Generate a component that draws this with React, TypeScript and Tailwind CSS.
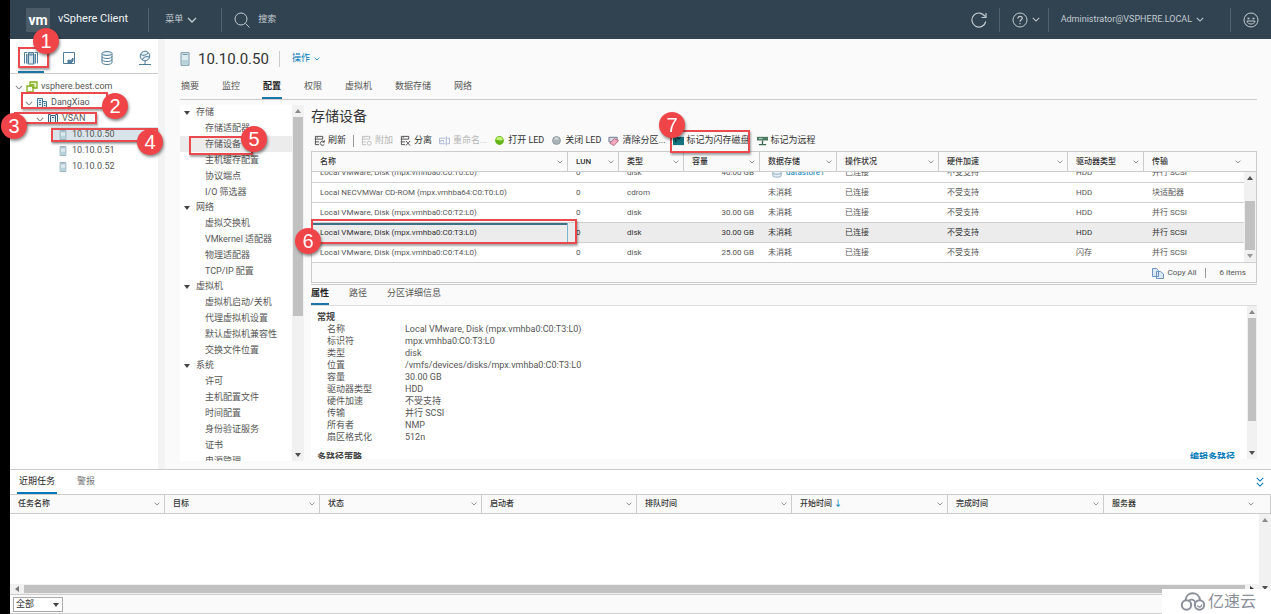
import { useEffect, useRef, type ReactNode } from 'react';
import { clsx } from 'clsx';

const tree = [
  { label: 'vsphere.best.com', indent: 'pl-[5px]', icon: 'vcenter', open: true },
  { label: 'DangXiao', indent: 'pl-[15px]', icon: 'datacenter', open: true },
  { label: 'VSAN', indent: 'pl-[26px]', icon: 'cluster', open: true },
  { label: '10.10.0.50', indent: 'ml-[41px] pl-1.5', icon: 'host', selected: true },
  { label: '10.10.0.51', indent: 'ml-[41px] pl-1.5', icon: 'host' },
  { label: '10.10.0.52', indent: 'ml-[41px] pl-1.5', icon: 'host' },
];

const hostTabs = ['摘要', '监控', '配置', '权限', '虚拟机', '数据存储', '网络'];

const navGroups = [
  { title: '存储', items: ['存储适配器', '存储设备', '主机缓存配置', '协议端点', 'I/O 筛选器'] },
  { title: '网络', items: ['虚拟交换机', 'VMkernel 适配器', '物理适配器', 'TCP/IP 配置'] },
  { title: '虚拟机', items: ['虚拟机启动/关机', '代理虚拟机设置', '默认虚拟机兼容性', '交换文件位置'] },
  { title: '系统', items: ['许可', '主机配置文件', '时间配置', '身份验证服务', '证书', '电源管理'] },
];

const deviceColumns = [
  { label: '名称', width: 'w-[256px]' },
  { label: 'LUN', width: 'w-[51px]' },
  { label: '类型', width: 'w-[65px]' },
  { label: '容量', width: 'w-[76px]' },
  { label: '数据存储', width: 'w-[77px]' },
  { label: '操作状况', width: 'w-[102px]' },
  { label: '硬件加速', width: 'w-[129px]' },
  { label: '驱动器类型', width: 'w-[76px]' },
  { label: '传输', width: 'w-[102px]' },
];

const devices = [
  ['Local VMware, Disk (mpx.vmhba0:C0:T0:L0)', '0', 'disk', '40.00 GB', 'datastore1', '已连接', '不受支持', 'HDD', '并行 SCSI'],
  ['Local NECVMWar CD-ROM (mpx.vmhba64:C0:T0:L0)', '0', 'cdrom', '', '未消耗', '已连接', '不受支持', 'HDD', '块适配器'],
  ['Local VMware, Disk (mpx.vmhba0:C0:T2:L0)', '0', 'disk', '30.00 GB', '未消耗', '已连接', '不受支持', 'HDD', '并行 SCSI'],
  ['Local VMware, Disk (mpx.vmhba0:C0:T3:L0)', '0', 'disk', '30.00 GB', '未消耗', '已连接', '不受支持', 'HDD', '并行 SCSI'],
  ['Local VMware, Disk (mpx.vmhba0:C0:T4:L0)', '0', 'disk', '25.00 GB', '未消耗', '已连接', '不受支持', '闪存', '并行 SCSI'],
];
const selectedDevice = 3;

const properties = [
  ['名称', 'Local VMware, Disk (mpx.vmhba0:C0:T3:L0)'],
  ['标识符', 'mpx.vmhba0:C0:T3:L0'],
  ['类型', 'disk'],
  ['位置', '/vmfs/devices/disks/mpx.vmhba0:C0:T3:L0'],
  ['容量', '30.00 GB'],
  ['驱动器类型', 'HDD'],
  ['硬件加速', '不受支持'],
  ['传输', '并行 SCSI'],
  ['所有者', 'NMP'],
  ['扇区格式化', '512n'],
];

const taskColumns = [
  { label: '任务名称', width: 'w-[155px]' },
  { label: '目标', width: 'w-[155px]' },
  { label: '状态', width: 'w-[162px]' },
  { label: '启动者', width: 'w-[155px]' },
  { label: '排队时间', width: 'w-[155px]' },
  { label: '开始时间', width: 'w-[156px]', sorted: true },
  { label: '完成时间', width: 'w-[156px]' },
  { label: '服务器', width: 'w-[167px]' },
];

function Chevron({ className }: { className?: string }) {
  return (
    <svg viewBox="0 0 10 6" className={clsx('shrink-0 fill-none stroke-current', className)} aria-hidden="true">
      <path d="M1 1l4 4 4-4" strokeWidth="1.3" />
    </svg>
  );
}

function TreeIcon({ kind }: { kind: string }) {
  if (kind === 'vcenter') {
    return (
      <svg viewBox="0 0 12 12" className="size-3 shrink-0 fill-none stroke-[#7fae1c]" strokeWidth="1.3" aria-hidden="true">
        <path d="M4 1h7v6H4z" fill="#eef6d3" />
        <path d="M1 5h6v6H1z" fill="#fff" />
        <path d="M5 5.5v-2h3v3H6" strokeWidth="0.9" />
      </svg>
    );
  }
  if (kind === 'datacenter') {
    return (
      <svg viewBox="0 0 12 12" className="size-3 shrink-0 fill-none stroke-[#43759a]" aria-hidden="true">
        <path d="M1.5 11V1.5h5V11M6.5 4.5h4V11h-4M1 11h3" fill="#e2eef5" />
        <path d="M3 3.5h2M3 5.5h2M3 7.5h2M8 6.5h1.500M8 8.500h1.500" />
      </svg>
    );
  }
  if (kind === 'cluster') {
    return (
      <svg viewBox="0 0 12 12" className="size-3 shrink-0 fill-none stroke-[#35607f]" aria-hidden="true">
        <path d="M3.500 2.500h5v8h-5z" fill="#e2eef5" />
        <path d="M3.500 1.500h-2v9M8.500 1.500h2v9M5 4.500h2" />
      </svg>
    );
  }
  return <HostIcon className="h-2.5 w-3" />;
}

function HostIcon({ className }: { className: string }) {
  return (
    <svg viewBox="0 0 10 14" className={clsx('shrink-0', className)} aria-hidden="true">
      <path d="M1 .7h8v12.6H1z" fill="#dcebef" stroke="#7898a8" />
      <path d="M2.500 2.500h5" stroke="#7898a8" />
      <path d="M2 8h6v4.500H2z" fill="#b6d3da" />
    </svg>
  );
}

const inventoryTabs: { name: string; drawing: ReactNode }[] = [
  {
    name: '主机和集群',
    drawing: (
      <>
        <path d="M5 4h6v10H5z" fill="#d9e8ef" />
        <path d="M4.500 2.500h-3v11M3.500 4v9.500M11.500 2.500h3v11M5.500 13.500v-11h5v11M6.500 5h3M12.500 4v9.500" />
      </>
    ),
  },
  {
    name: '虚拟机和模板',
    drawing: (
      <>
        <path d="M2.500 2.500h11v11h-11z" />
        <path d="M12 8v3l-2 2H7v-3l3 .5z" fill="#5c8aa5" />
      </>
    ),
  },
  {
    name: '存储',
    drawing: (
      <>
        <path d="M3 3.500v9c0 1 2.200 2 5 2s5-1 5-2v-9" />
        <ellipse cx="8" cy="3.500" rx="5" ry="2" fill="#e6f0f5" />
        <path d="M3 6.500c0 1 2.200 2 5 2s5-1 5-2M3 9.500c0 1 2.200 2 5 2s5-1 5-2" />
      </>
    ),
  },
  {
    name: '网络',
    drawing: (
      <>
        <circle cx="8" cy="6" r="4.800" fill="#e6f0f5" />
        <path d="M4 4.500c2 1.500 5 1 7-1.500M5.500 9.800C6 7 9 6 12.500 7M8 11v3.500M2 14.500h12" />
      </>
    ),
  },
];

function ToolIcon({ kind }: { kind: string }) {
  switch (kind) {
    case 'ledOn':
      return (
        <svg viewBox="0 0 12 12" className="size-[11px] shrink-0" aria-hidden="true">
          <circle cx="6" cy="6" r="4.800" fill="#63b51b" />
          <path d="M2.500 5.500a3.500 3.500 0 017 0c-2 1.500-4.500-.5-7 0z" fill="#c3ef75" />
        </svg>
      );
    case 'ledOff':
      return (
        <svg viewBox="0 0 12 12" className="size-[11px] shrink-0" aria-hidden="true">
          <circle cx="6" cy="6" r="4.300" fill="#aab4b8" stroke="#8b969b" />
          <path d="M3.500 5a2.500 2.500 0 015 0z" fill="#d5dbdd" />
        </svg>
      );
    case 'erase':
      return (
        <svg viewBox="0 0 12 12" className="size-[11px] shrink-0" aria-hidden="true">
          <path d="M1 2.500h9v5H1z" fill="#d5d7e2" stroke="#6d7188" />
          <path d="M2 9l5-5 4.500 2-5 5.500z" fill="#f2a9bd" stroke="#a3566d" strokeWidth="0.8" />
        </svg>
      );
    case 'flash':
      return (
        <svg viewBox="0 0 12 12" className="size-[11px] shrink-0" aria-hidden="true">
          <path d="M0 2h12v9H0z" fill="#14737f" />
          <path d="M3 4v4M5 4h3" stroke="#0b3b45" strokeWidth="1.500" />
        </svg>
      );
    case 'remote':
      return (
        <svg viewBox="0 0 12 12" className="size-[11px] shrink-0" aria-hidden="true">
          <path d="M0 2h12v4H0z" fill="#4c7a63" />
          <path d="M2 4h4" stroke="#cfe3d8" />
          <path d="M6 6v4M2 10.500h8" stroke="#3f6b55" strokeWidth="1.500" />
        </svg>
      );
    case 'rename':
      return (
        <svg viewBox="0 0 12 12" className="size-[11px] shrink-0 fill-none stroke-[#a9b4d6]" aria-hidden="true">
          <path d="M7 3.500H.500v6H7M9 3.500h2.500v6H9M8 1.500v10M2 8V6h3v2" />
        </svg>
      );
    default:
      return (
        <svg viewBox="0 0 12 12" className="size-[11px] shrink-0 fill-none stroke-current" strokeWidth="0.9" aria-hidden="true">
          <path d="M9.500 4.500v-3h-8v9h4M1.500 4.500h8M1.500 7.500h4M3 2.800h1" />
          {kind === 'refresh' && <path d="M11 7.500a2.300 2.300 0 10.300 2.500M11.300 5.800v2h-2" />}
          {kind === 'attach' && <circle cx="9" cy="9" r="2.200" />}
          {kind === 'detach' && <path d="M6.500 6.500l4.500 5M11 6.500l-4.500 5" />}
        </svg>
      );
  }
}

const tools = [
  { label: '附加', icon: 'attach', disabled: true },
  { label: '分离', icon: 'detach' },
  { label: '重命名...', icon: 'rename', disabled: true },
  { label: '打开 LED', icon: 'ledOn' },
  { label: '关闭 LED', icon: 'ledOff' },
  { label: '清除分区...', icon: 'erase' },
  { label: '标记为闪存磁盘', icon: 'flash' },
  { label: '标记为远程', icon: 'remote' },
];

function Arrow({ className }: { className?: string }) {
  return (
    <svg viewBox="0 0 6 4" className={clsx('h-1 w-1.5 shrink-0 fill-current', className)} aria-hidden="true">
      <path d="M0 4l3-4 3 4z" />
    </svg>
  );
}

function Scrollbar({ thumb, className }: { thumb: string; className?: string }) {
  return (
    <div className={clsx('flex shrink-0 flex-col items-center bg-[#f1f1f1]', className)}>
      <Arrow className="my-1 text-[#8a8a8a]" />
      <div className="flex min-h-0 w-full flex-1 flex-col px-px">
        <div className={clsx('w-full bg-[#c1c1c1]', thumb)} />
      </div>
      <Arrow className="my-1 rotate-180 text-[#505050]" />
    </div>
  );
}

function Header() {
  return (
    <header className="flex h-[39px] shrink-0 items-center bg-[#314351] text-[9px] text-[#c3ccd2]">
      <div className="ml-4 flex size-6 items-center justify-center bg-[#4b5b67] text-sm font-bold text-white">vm</div>
      <span className="ml-2 text-[11px] text-[#eef1f3]">vSphere Client</span>
      <div className="ml-5 h-6 w-px bg-[#52626e]" />
      <button className="ml-4 flex items-center gap-1">
        菜单
        <Chevron className="w-2.5" />
      </button>
      <div className="ml-6 h-6 w-px bg-[#52626e]" />
      <label className="ml-3 flex items-center gap-2">
        <svg viewBox="0 0 16 16" className="size-4 fill-none stroke-current" aria-hidden="true">
          <circle cx="7" cy="7" r="6" />
          <path d="M11.500 11.500l4 4" />
        </svg>
        <input type="text" placeholder="搜索" className="w-24 bg-transparent outline-none placeholder:text-[#c3ccd2]" />
      </label>
      <div className="ml-auto flex items-center">
        <button aria-label="刷新">
          <svg viewBox="0 0 16 16" className="size-4 fill-none stroke-current" strokeWidth="1.200" aria-hidden="true">
            <path d="M14 4.500a7 7 0 10.800 5M15 1v4.500h-4.500" />
          </svg>
        </button>
        <div className="ml-3 h-6 w-px bg-[#52626e]" />
        <button aria-label="帮助" className="ml-3 flex items-center gap-1">
          <svg viewBox="0 0 16 16" className="size-4 fill-none stroke-current" aria-hidden="true">
            <circle cx="8" cy="8" r="7" />
            <path d="M5.800 6.500c0-3 4.500-2.800 4.500-.2 0 1.600-2.300 1.500-2.300 3.400M8 11v1.300" strokeWidth="1.200" />
          </svg>
          <Chevron className="w-2" />
        </button>
        <div className="ml-2 h-6 w-px bg-[#52626e]" />
        <button className="ml-3 flex items-center gap-1">
          Administrator@VSPHERE.LOCAL
          <Chevron className="w-2" />
        </button>
        <div className="ml-[26px] h-6 w-px bg-[#52626e]" />
        <button aria-label="反馈" className="mx-3">
          <svg viewBox="0 0 16 16" className="size-4 fill-none stroke-current" aria-hidden="true">
            <circle cx="8" cy="8" r="7" />
            <path d="M4.500 6.500h2M9.500 6.500h2" strokeWidth="1.300" />
            <path d="M4 9h8c-.5 4-7.500 4-8 0z" />
          </svg>
        </button>
      </div>
    </header>
  );
}

function Inventory() {
  return (
    <aside className="w-[148px] shrink-0 bg-white">
      <div className="flex h-[35px] items-end gap-3 border-b border-[#ccc] pl-2">
        {inventoryTabs.map((tab, i) => (
          <button
            key={tab.name}
            aria-label={tab.name}
            className={clsx(
              'flex h-7 w-[26px] shrink-0 items-center justify-center border-b-2',
              i === 0 ? 'border-[#1a76a8]' : 'border-transparent',
            )}
          >
            <svg viewBox="0 0 16 16" className="size-4 fill-none stroke-[#3c6f8e]" strokeWidth="0.9" aria-hidden="true">
              {tab.drawing}
            </svg>
          </button>
        ))}
      </div>
      <ul className="pt-[5px] text-[9px] text-[#565656]">
        {tree.map((node) => (
          <li key={node.label} className={clsx('flex h-4 items-center gap-[3px]', node.indent, node.selected && 'bg-[#d9e4ea]')}>
            {node.open && <Chevron className="w-2 text-[#8a8a8a]" />}
            <TreeIcon kind={node.icon} />
            <span>{node.label}</span>
          </li>
        ))}
      </ul>
    </aside>
  );
}

function SettingsNav() {
  return (
    <div className="flex w-[124px] shrink-0">
      <nav className="min-w-0 flex-1 overflow-hidden bg-white text-[9px] whitespace-nowrap text-[#565656]">
        {navGroups.map((group) => (
          <section key={group.title}>
            <h3 className="flex h-[15px] items-center gap-1.5 pl-1">
              <Arrow className="rotate-180 text-[#444]" />
              {group.title}
            </h3>
            <ul>
              {group.items.map((item) => (
                <li key={item} className={clsx('h-4 pl-[25px] leading-4', item === '存储设备' && 'bg-[#ececec]')}>
                  <a href="#">{item}</a>
                </li>
              ))}
            </ul>
          </section>
        ))}
      </nav>
      <Scrollbar className="w-3" thumb="h-[60%]" />
    </div>
  );
}

function DeviceGrid() {
  const scrollRef = useRef<HTMLDivElement>(null);

  useEffect(() => {
    const el = scrollRef.current;
    if (el) el.scrollTop = el.scrollHeight;
  }, []);

  return (
    <div className="shrink-0 border border-[#ccc] bg-[#fafafa] text-[8px] text-[#565656]">
      <div className="flex">
        <div ref={scrollRef} className="h-[111px] min-w-0 flex-1 overflow-y-auto [scrollbar-width:none]">
          <table className="w-full table-fixed border-separate border-spacing-0 whitespace-nowrap">
            <thead>
              <tr>
                {deviceColumns.map((col) => (
                  <th
                    key={col.label}
                    className={clsx('sticky top-0 z-10 h-5 border-r border-b border-[#ccc] bg-[#fafafa] pl-2 text-left font-medium text-[#333]', col.width)}
                  >
                    <span className="flex items-center justify-between pr-1">
                      {col.label}
                      <Chevron className="w-1.5 text-[#777]" />
                    </span>
                  </th>
                ))}
              </tr>
            </thead>
            <tbody className="bg-white">
              {devices.map((row, r) => (
                <tr key={row[0]} className={clsx(r === selectedDevice && 'bg-[#ececec] text-[#333]')}>
                  {row.map((cell, c) => (
                    <td
                      key={c}
                      className={clsx(
                        'h-5 border-b border-[#d0d0d0] pl-2',
                        c === 3 && 'pr-1.5 text-right',
                        r === selectedDevice && c === 0 && 'border-r border-r-[#7db4cf] shadow-[inset_0_2px_#3e7188]',
                      )}
                    >
                      {cell === 'datastore1' ? (
                        <a href="#" className="flex items-center gap-1 pl-1 text-[#0079b8]">
                          <svg viewBox="0 0 12 12" className="size-2.5 fill-[#e6f0f5] stroke-[#7fa3b8]" aria-hidden="true">
                            <path d="M1 2.500v7c0 2 10 2 10 0v-7c0-2-10-2-10 0c0 2 10 2 10 0M1 6c0 2 10 2 10 0" />
                          </svg>
                          {cell}
                        </a>
                      ) : (
                        cell
                      )}
                    </td>
                  ))}
                </tr>
              ))}
            </tbody>
          </table>
        </div>
        <div className="flex w-3 shrink-0 flex-col border-b border-[#d0d0d0]">
          <div className="h-5 border-b border-[#ccc]" />
          <div className="flex min-h-0 flex-1 flex-col items-center bg-[#f1f1f1]">
            <Arrow className="my-1 text-[#505050]" />
            <div className="flex w-full flex-1 flex-col justify-end px-px">
              <div className="h-3/4 bg-[#c1c1c1]" />
            </div>
            <Arrow className="my-1 rotate-180 text-[#999]" />
          </div>
        </div>
      </div>
      <div className="flex h-[19px] items-center justify-end gap-2 pr-2.5">
        <button className="flex items-center gap-[3px]">
          <svg viewBox="0 0 12 12" className="size-3 fill-[#dbe8f7] stroke-[#6f93c2]" aria-hidden="true">
            <path d="M.500 1.500h4l2 2v6h-6zM4.500 4.500h4l3 2.500v4.500h-7z" />
          </svg>
          Copy All
        </button>
        <div className="h-2.5 w-px bg-[#999]" />
        <span className="pl-1.5">6 items</span>
      </div>
    </div>
  );
}

function DeviceDetails() {
  return (
    <section className="mt-px mb-0.5 flex min-h-0 flex-1 flex-col border-t border-[#ccc]">
      <div className="flex shrink-0 gap-5 border-b border-[#ddd] text-[9px] text-[#565656]">
        <button className="h-5 border-b-2 border-[#1a76a8] font-bold text-[#222]">属性</button>
        <button className="h-5 border-b-2 border-transparent">路径</button>
        <button className="h-5 border-b-2 border-transparent">分区详细信息</button>
      </div>
      <div className="flex min-h-0 flex-1">
        <div className="min-w-0 flex-1 overflow-hidden bg-white pt-[5px] pl-1.5 text-[9px] leading-3 text-[#565656]">
          <h3 className="font-bold text-[#444]">常规</h3>
          <dl className="grid grid-cols-[78px_1fr] pl-2.5">
            {properties.map(([name, value]) => (
              <div key={name} className="contents">
                <dt>{name}</dt>
                <dd>{value}</dd>
              </div>
            ))}
          </dl>
          <div className="flex justify-between pt-2 pr-3 font-bold">
            <h3 className="text-[#444]">多路径策略</h3>
            <a href="#" className="text-[#0079b8]">编辑多路径</a>
          </div>
        </div>
        <Scrollbar className="w-2.5" thumb="h-4/5" />
      </div>
    </section>
  );
}

function HostView() {
  return (
    <main className="flex min-w-0 flex-1 flex-col border-l-[7px] border-[#f3f3f3] bg-[#fafafa] pr-3.5 pb-2 pl-[15px]">
      <div className="flex h-10 shrink-0 items-center">
        <HostIcon className="h-3.5 w-2.5" />
        <h1 className="ml-2 text-[15px] text-[#333]">10.10.0.50</h1>
        <div className="ml-2.5 h-4 w-px bg-[#ccc]" />
        <button className="ml-3 flex items-center gap-1 text-[9px] text-[#0079b8]">
          操作
          <Chevron className="w-1.5" />
        </button>
      </div>
      <div className="mb-[5px] flex shrink-0 gap-[21px] border-b border-[#ccc] text-[9px] text-[#565656]">
        {hostTabs.map((tab) => (
          <button
            key={tab}
            className={clsx('h-5 border-b-2 px-px pb-0.5', tab === '配置' ? 'border-[#1a76a8] font-bold text-[#222]' : 'border-transparent')}
          >
            {tab}
          </button>
        ))}
      </div>
      <div className="flex min-h-0 flex-1 gap-[7px]">
        <SettingsNav />
        <div className="flex min-w-0 flex-1 flex-col">
          <h2 className="shrink-0 text-sm leading-[22px] text-[#333]">存储设备</h2>
          <div className="flex h-6 shrink-0 items-center gap-[7px] pt-[3px] pl-[3px] text-[9px] whitespace-nowrap text-[#333]">
            <button className="flex items-center gap-[3px]">
              <ToolIcon kind="refresh" />
              刷新
            </button>
            <div className="h-3 w-px bg-[#999]" />
            {tools.map((tool) => (
              <button key={tool.label} disabled={tool.disabled} className="flex items-center gap-[3px] disabled:text-[#b5b5b5]">
                <ToolIcon kind={tool.icon} />
                {tool.label}
              </button>
            ))}
          </div>
          <DeviceGrid />
          <DeviceDetails />
        </div>
      </div>
    </main>
  );
}

function TasksPanel() {
  return (
    <section className="flex h-[145px] shrink-0 flex-col border-t border-[#ccc] bg-white">
      <div className="flex shrink-0 items-center gap-[18px] px-[7px] text-[9px]">
        <button className="h-6 border-b-2 border-[#0079b8] px-0.5 pt-0.5 text-[#222]">近期任务</button>
        <button className="h-6 border-b-2 border-transparent px-0.5 pt-0.5 text-[#777]">警报</button>
        <button aria-label="折叠" className="ml-auto flex flex-col text-[#0079b8]">
          <Chevron className="w-2" />
          <Chevron className="w-2" />
        </button>
      </div>
      <table className="w-full shrink-0 table-fixed border-separate border-spacing-0 border-y border-[#ccc] bg-[#fafafa] text-[8px] text-[#333]">
        <thead>
          <tr>
            {taskColumns.map((col) => (
              <th key={col.label} className={clsx('h-[18px] border-r border-[#ccc] pl-2 text-left font-medium last:pr-3', col.width)}>
                <span className="flex items-center justify-between pr-1">
                  <span>
                    {col.label}
                    {col.sorted && <span className="pl-0.5 text-[#0079b8]">↓</span>}
                  </span>
                  <Chevron className="w-1.5 text-[#777]" />
                </span>
              </th>
            ))}
          </tr>
        </thead>
      </table>
      <div className="flex min-h-0 flex-1">
        <div className="flex flex-1 flex-col justify-end">
          <div className="flex h-2.5 items-center bg-[#f1f1f1] text-[#777]">
            <Arrow className="mx-1 -rotate-90" />
            <div className="h-2 flex-1 bg-[#c1c1c1]" />
            <Arrow className="mx-1 rotate-90 text-[#333]" />
          </div>
        </div>
        <Scrollbar className="w-3" thumb="h-0" />
      </div>
      <div className="flex h-5 shrink-0 items-center border-y border-[#ccc] bg-[#fafafa] pl-[3px]">
        <div className="relative">
          <select
            aria-label="任务筛选"
            className="block h-[15px] w-[50px] appearance-none border border-[#aaa] bg-white pl-0.5 text-[9px] leading-3 text-[#333]"
          >
            <option>全部</option>
          </select>
          <Arrow className="pointer-events-none absolute top-1.5 right-1 rotate-180 text-[#444]" />
        </div>
      </div>
    </section>
  );
}

// Numbered steps drawn over the page
const steps = [
  { n: 1, box: 'left-[18px] top-[47px] h-[21px] w-[31px]', dot: 'left-[33px] top-[28px]' },
  { n: 2, box: 'left-[21px] top-[92px] h-[17px] w-[87px]', dot: 'left-[102px] top-[93px]' },
  { n: 3, box: 'left-[14px] top-[112px] h-[12px] w-[83px]', dot: 'left-[1px] top-[113px]' },
  { n: 4, box: 'left-[51px] top-[128px] h-[14px] w-[107px]', dot: 'left-[137px] top-[129px]' },
  { n: 5, box: 'left-[189px] top-[136px] h-[19px] w-[64px]', dot: 'left-[241px] top-[126px]' },
  { n: 6, box: 'left-[311px] top-[219px] h-[25px] w-[266px]', dot: 'left-[295px] top-[228px]' },
  { n: 7, box: 'left-[670px] top-[130px] h-[23px] w-[80px]', dot: 'left-[659px] top-[112px]' },
];

function Annotations() {
  return (
    <div className="pointer-events-none font-['Liberation_Sans',sans-serif]">
      {steps.map((step) => (
        <div key={step.n}>
          <div className={clsx('absolute z-20 border-2 border-[#ea4a4d] shadow-[1px_2px_2px_rgba(0,0,0,0.35)]', step.box)} />
          <div
            className={clsx(
              'absolute z-30 flex size-[26px] items-center justify-center rounded-full bg-[#f04548] text-xl leading-none text-white shadow-[1px_2px_3px_rgba(0,0,0,0.45)]',
              step.dot,
            )}
          >
            {step.n}
          </div>
        </div>
      ))}
    </div>
  );
}

function Watermark() {
  return (
    <div className="absolute right-0 bottom-0 z-20 flex h-[25px] w-[109px] items-center gap-0.5 bg-white pl-[18px] text-base text-[#8a8f9a]">
      <svg viewBox="0 0 26 19" className="w-[26px] shrink-0 fill-none stroke-current" strokeWidth="2" aria-hidden="true">
        <path d="M5.500 8.500C6-1 19-1 20 8" />
        <circle cx="6.500" cy="13" r="4.700" />
        <circle cx="19.500" cy="13" r="4.700" />
        <path d="M9 8.500c4-2.500 8 1 5.500 5" strokeWidth="1.600" />
        <path d="M17.500 13.500a2 2 0 104-1" strokeWidth="1.400" />
      </svg>
      亿速云
    </div>
  );
}

export default function App() {
  return (
    <div className="relative flex h-screen flex-col overflow-hidden bg-black pl-2.5 font-['Roboto','Noto_Sans_CJK_SC',sans-serif]">
      <Header />
      <div className="flex min-h-0 flex-1">
        <Inventory />
        <HostView />
      </div>
      <TasksPanel />
      <Annotations />
      <Watermark />
    </div>
  );
}
